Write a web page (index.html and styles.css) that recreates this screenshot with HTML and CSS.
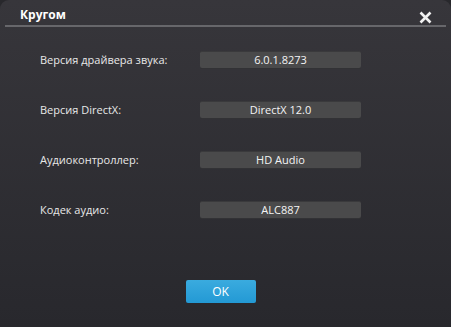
FILE: index.html
```html
<!DOCTYPE html>
<html lang="ru">
<head>
  <meta charset="UTF-8">
  <title>Кругом</title>
  <link rel="stylesheet" href="styles.css">
</head>
<body>
  <div class="window">
    <div class="titlebar">
      <h1>Кругом</h1>
      <span class="close">
        <svg width="13" height="13" viewBox="0 0 13 13"><path d="M1.5 1.5 L11.5 11.5 M11.5 1.5 L1.5 11.5" stroke="#f2f2f2" stroke-width="2.6"/></svg>
      </span>
    </div>

    <div class="rows">
      <div class="row">
        <span class="label">Версия драйвера звука:</span>
        <span class="value">6.0.1.8273</span>
      </div>
      <div class="row">
        <span class="label">Версия DirectX:</span>
        <span class="value">DirectX 12.0</span>
      </div>
      <div class="row">
        <span class="label">Аудиоконтроллер:</span>
        <span class="value">HD Audio</span>
      </div>
      <div class="row">
        <span class="label">Кодек аудио:</span>
        <span class="value">ALC887</span>
      </div>
    </div>

    <div class="actions">
      <button class="ok-btn">OK</button>
    </div>
  </div>
</body>
</html>
```

FILE: styles.css
```css
html, body {
  margin: 0;
  height: 100%;
}
body {
  background-color: #28282c;
  font-family: 'Open Sans', 'Noto Sans', sans-serif;
  overflow: hidden;
}
.window {
  height: 327px;
  box-sizing: border-box;
  border-radius: 9px 9px 0 0;
  background: linear-gradient(#37363b, #28282d);
  padding: 0 5px;
  display: flex;
  flex-direction: column;
}
.titlebar {
  height: 25px;
  border-bottom: 2px solid #67676b;
  display: flex;
  align-items: flex-end;
  justify-content: space-between;
  padding: 0 14px 0 15px;
}
.titlebar h1 {
  margin: 0 0 2px;
  font-size: 12px;
  font-weight: 700;
  color: #ffffff;
}
.close {
  display: flex;
  margin-bottom: 1px;
}
.rows {
  padding: 24px 0 0 35px;
  display: flex;
  flex-direction: column;
  gap: 33px;
}
.row {
  display: flex;
  align-items: center;
  height: 17px;
}
.label {
  width: 160px;
  font-size: 11px;
  color: #e8e8e8;
}
.value {
  width: 161px;
  height: 17px;
  box-sizing: border-box;
  background-color: #4a4a4b;
  border-top: 1px solid #3a3a3c;
  border-radius: 2px;
  box-shadow: 0 1px 0 #323235;
  font-size: 11px;
  color: #f4f4f4;
  text-align: center;
  line-height: 15px;
}
.actions {
  margin-top: auto;
  padding: 0 10px 24px 0;
  display: flex;
  justify-content: center;
}
.ok-btn {
  width: 70px;
  height: 23px;
  border: none;
  border-radius: 2px;
  background: linear-gradient(#3aabdf, #2399d4);
  color: #ffffff;
  font-family: 'Open Sans', sans-serif;
  font-size: 12px;
  padding: 0;
  cursor: pointer;
}
```
